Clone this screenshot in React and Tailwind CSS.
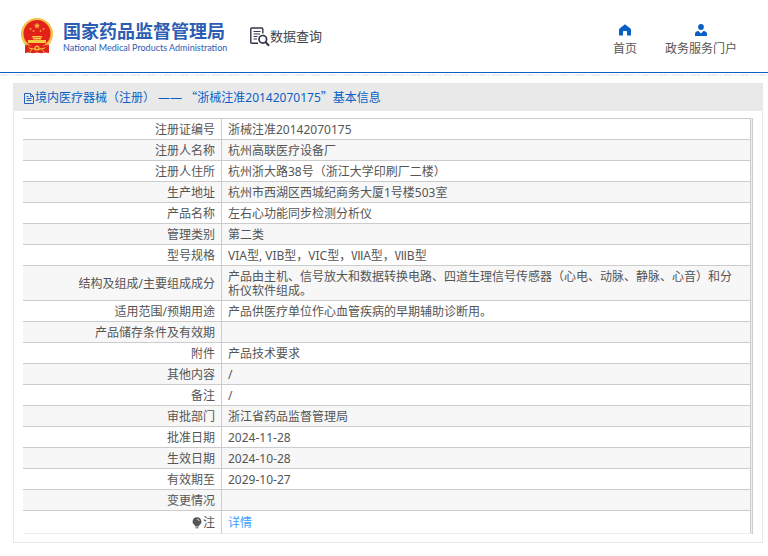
import React from "react";

const rows = [
  ["注册证编号", "浙械注准20142070175"],
  ["注册人名称", "杭州高联医疗设备厂"],
  ["注册人住所", "杭州浙大路38号（浙江大学印刷厂二楼）"],
  ["生产地址", "杭州市西湖区西城纪商务大厦1号楼503室"],
  ["产品名称", "左右心功能同步检测分析仪"],
  ["管理类别", "第二类"],
  ["型号规格", "VIA型, VIB型，VIC型，ⅦA型，ⅦB型"],
  [
    "结构及组成/主要组成成分",
    "产品由主机、信号放大和数据转换电路、四道生理信号传感器（心电、动脉、静脉、心音）和分析仪软件组成。",
  ],
  ["适用范围/预期用途", "产品供医疗单位作心血管疾病的早期辅助诊断用。"],
  ["产品储存条件及有效期", ""],
  ["附件", "产品技术要求"],
  ["其他内容", "/"],
  ["备注", "/"],
  ["审批部门", "浙江省药品监督管理局"],
  ["批准日期", "2024-11-28"],
  ["生效日期", "2024-10-28"],
  ["有效期至", "2029-10-27"],
  ["变更情况", ""],
];

function Emblem() {
  return (
    <svg viewBox="0 0 34 36" className="h-9 w-[34px]" aria-hidden="true">
      <path d="M5 26 5 35l4-.5 4 .8 4-.8 4 .8 4-.8 4 .5V26z" fill="#d9251c" />
      <circle cx="17" cy="16" r="16" fill="#efb93c" />
      <circle cx="17" cy="16" r="14.800" fill="none" stroke="#f7d869" strokeWidth="1" strokeDasharray="2 1" />
      <circle cx="17" cy="15.500" r="13.500" fill="#e3211b" />
      <path d="m17 4.500 .9 2.200 2.400.1-1.900 1.500.7 2.300-2.100-1.300-2.100 1.300.7-2.300-1.900-1.500 2.400-.1z" fill="#f5b93f" />
      <g fill="#f2a93a">
        <circle cx="10.500" cy="11" r=".9" />
        <circle cx="23.500" cy="11" r=".9" />
        <circle cx="13.500" cy="13" r=".9" />
        <circle cx="20.500" cy="13" r=".9" />
      </g>
      <path d="M12.500 18h9l1 1.500h-11zM13 20h8v1.500h-8zM8 22h18v3H8z" fill="#f8cb45" />
      <path d="M6 26.500q11 4 22 0l-1 2.500q-10 3-20 0z" fill="#e3211b" />
      <circle cx="17" cy="30" r="2.600" fill="#f1b62b" />
      <circle cx="17" cy="30" r="1.100" fill="#d9251c" />
      <path d="M9 30l3 1-2 3M25 30l-3 1 2 3" fill="none" stroke="#f1b62b" strokeWidth="1" />
    </svg>
  );
}

function QueryIcon() {
  return (
    <svg viewBox="0 0 20 20" className="h-5 w-5" fill="none" stroke="#34344a" aria-hidden="true">
      <path d="M8 16.200H1.800q-1 0-1-1V2q0-1 1-1h10q1 0 1 1v4.500" strokeWidth="1.400" />
      <path d="M3.500 4.500h7M3.500 7h6.500M3.500 9.500h4M3.500 12h3.500" strokeWidth="1.200" />
      <circle cx="12.800" cy="12.300" r="3.800" strokeWidth="1.700" />
      <path d="m15.500 15 3.500 3.700" strokeWidth="2" />
    </svg>
  );
}

function HomeIcon() {
  return (
    <svg viewBox="0 0 12 12" className="h-3 w-3" fill="#0a5fc4" aria-hidden="true">
      <path d="M6 .3 11.400 4.600q.6.500.6 1.200V11.500H8V7.800q0-.8-.8-.8H4.800q-.8 0-.8.800v3.700H0V5.800q0-.7.6-1.200z" />
    </svg>
  );
}

function UserIcon() {
  return (
    <svg viewBox="0 0 12 12" className="h-3 w-3" fill="#0a5fc4" aria-hidden="true">
      <circle cx="6" cy="3" r="2.900" />
      <path d="M0 12V10q0-2.700 3.500-3L6 9.500 8.500 7Q12 7.300 12 10v2z" />
    </svg>
  );
}

function FileIcon() {
  return (
    <svg viewBox="0 0 12 12" className="h-3 w-3" fill="none" stroke="#2864bd" aria-hidden="true">
      <path d="M1.500 1.500h6l3 3v7h-9zM7.500 1.500v3h3M3.500 4.500h2M3.500 6.500h5M3.500 8.500h5" />
    </svg>
  );
}

function BulbIcon() {
  return (
    <svg viewBox="0 0 12 12" className="h-3 w-3" aria-hidden="true">
      <path d="M6 .3a4.200 4.200 0 0 0-2.500 7.700l.9 1.500h3.200l.9-1.500A4.200 4.200 0 0 0 6 .3z" fill="#555" />
      <path d="M4.500 10.800h3" stroke="#555" />
      <path d="M6 2.200q2 0 2.200 2" stroke="#ddd" fill="none" />
    </svg>
  );
}

const labelCell = "w-[199px] border-r border-b border-[#ccc] pt-1 pb-[2px] pr-[6px] text-right font-normal";
const valueCell = "border-r border-b border-[#ccc] pt-1 pb-[2px] pr-4 pl-[6px]";

export default function App() {
  return (
    <div className="bg-white font-['Noto_Sans','Noto_Sans_CJK_SC',sans-serif] text-xs text-[#555]">
      <header className="flex h-[73px] items-center justify-between border-b border-[#0a5fc4] pr-[31px] pl-5">
        <div className="flex items-center">
          <a href="#home" className="flex items-center gap-[9px] text-[#2c5db3]">
            <Emblem />
            <span className="flex w-[161px] flex-col pt-[2px] whitespace-nowrap">
              <span className="text-[18px] leading-[22px] font-bold">国家药品监督管理局</span>
              <span className="font-['Lato',sans-serif] text-[9px] leading-3">
                National Medical Products Administration
              </span>
            </span>
          </a>
          <a href="#query" className="ml-[26px] flex items-center pt-px text-[13px] text-[#444]">
            <QueryIcon />
            数据查询
          </a>
        </div>
        <nav className="flex gap-[28px] pt-[8px]">
          <a href="#home" className="flex flex-col items-center gap-[5px]">
            <HomeIcon />
            <span>首页</span>
          </a>
          <a href="#portal" className="flex flex-col items-center gap-[5px]">
            <UserIcon />
            <span>政务服务门户</span>
          </a>
        </nav>
      </header>
      <div className="mt-px h-[2px] bg-[repeating-linear-gradient(135deg,#e4e4e4_0_1px,#fff_1px_2px)]" />

      <main className="mt-[7px] mr-[5px] mb-[13px] ml-[13px] border border-[#e8e8ec] pb-2">
        <h1 className="flex h-[27px] items-center bg-[#e9e9e9] pl-[9px] text-[#0a5fc4]">
          <FileIcon />
          <span className="whitespace-pre">
            境内医疗器械（注册） —— <span className="font-['Noto_Sans_CJK_SC',sans-serif]">“</span>
            浙械注准20142070175<span className="font-['Noto_Sans_CJK_SC',sans-serif]">”</span>基本信息
          </span>
        </h1>
        <div className="mt-[7px] mr-[9px] ml-[9px] border-r border-[#ccc] bg-[#eee] pr-px">
          <table className="w-full table-fixed border-separate border-spacing-0 border-t border-[#ccc] bg-white leading-[14px]">
            <tbody>
              {rows.map(([label, value]) => (
                <tr key={label} className="h-[21px] even:bg-[#f7f7f7]">
                  <th scope="row" className={labelCell}>{label}</th>
                  <td className={valueCell}>{value}</td>
                </tr>
              ))}
              <tr className="h-[23px]">
                <th scope="row" className="border-r border-b border-r-[#ccc] border-b-[#ebebf2] pt-1 pr-[6px] pb-[2px] text-right font-normal">
                  <span className="flex items-center justify-end"><BulbIcon />注</span>
                </th>
                <td className="border-r border-b border-r-[#ccc] border-b-[#ebebf2] pt-1 pb-[2px] pl-[6px]">
                  <a href="#detail" className="text-[#409eff]">详情</a>
                </td>
              </tr>
            </tbody>
          </table>
        </div>
      </main>
    </div>
  );
}
